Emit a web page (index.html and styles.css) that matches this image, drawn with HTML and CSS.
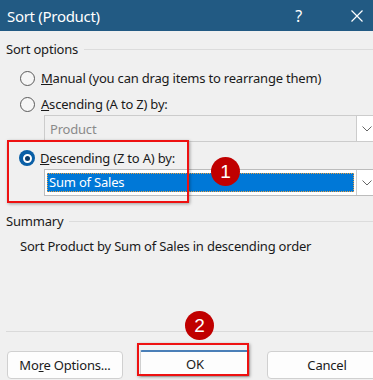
FILE: index.html
```html
<!DOCTYPE html>
<html lang="en">
<head>
    <meta charset="UTF-8">
    <meta name="viewport" content="width=device-width, initial-scale=1.0">
    <title>Sort (Product)</title>
    <link rel="stylesheet" href="styles.css">
</head>
<body>
    <div class="dialog">
        <div class="titlebar">
            <span class="title">Sort (Product)</span>
            <span class="help">?</span>
            <svg class="close" width="12" height="12" viewBox="0 0 12 12">
                <path d="M0.5 0.5 L11.5 11.5 M11.5 0.5 L0.5 11.5" stroke="#fff" stroke-width="1.2" fill="none"/>
            </svg>
        </div>

        <div class="content">
            <div class="legend"><span>Sort options</span><div class="rule"></div></div>

            <div class="radio-row first">
                <span class="radio"></span>
                <span class="label"><u>M</u>anual (you can drag items to rearrange them)</span>
            </div>
            <div class="radio-row">
                <span class="radio"></span>
                <span class="label"><u>A</u>scending (A to Z) by:</span>
            </div>
            <div class="select disabled">
                <div class="select-value">Product</div>
                <div class="select-arrow">
                    <svg width="10" height="6" viewBox="0 0 10 6"><path d="M0.5 0.5 L5 5 L9.5 0.5" stroke="#666" fill="none"/></svg>
                </div>
            </div>
            <div class="radio-row desc">
                <span class="radio checked"></span>
                <span class="label"><u>D</u>escending (Z to A) by:</span>
            </div>
            <div class="select">
                <div class="select-value"><span class="highlight">Sum of Sales</span></div>
                <div class="select-arrow">
                    <svg width="10" height="6" viewBox="0 0 10 6"><path d="M0.5 0.5 L5 5 L9.5 0.5" stroke="#666" fill="none"/></svg>
                </div>
            </div>

            <div class="legend summary-legend"><span>Summary</span><div class="rule"></div></div>
            <p class="summary">Sort Product by Sum of Sales in descending order</p>

            <div class="separator"></div>

            <div class="buttons">
                <button class="btn more">Mo<u>r</u>e Options...</button>
                <button class="btn ok">OK</button>
                <button class="btn cancel">Cancel</button>
            </div>
        </div>

        <div class="mark box-desc"></div>
        <div class="mark box-ok"></div>
        <div class="badge badge-1">1</div>
        <div class="badge badge-2">2</div>
    </div>
</body>
</html>
```

FILE: styles.css
```css
body {
    margin: 0;
    width: 373px;
    height: 380px;
    overflow: hidden;
    font-family: "Segoe UI", "Noto Sans", sans-serif;
    font-size: 13px;
    letter-spacing: -0.2px;
    color: #1a1a1a;
    background-color: #f0f0f0;
}

.dialog {
    position: relative;
    width: 390px;
    height: 380px;
    background-color: #f0f0f0;
}

.titlebar {
    height: 31px;
    background-color: #225a83;
    color: #fff;
    display: flex;
    align-items: center;
    padding-left: 7px;
}

.title {
    font-size: 15px;
    letter-spacing: -0.3px;
    flex: 1;
}

.help {
    font-size: 16px;
    margin-right: 49px;
}

.close {
    margin-right: 27px;
}

.content {
    padding: 0 0 0 6px;
}

.legend {
    display: flex;
    align-items: center;
    height: 20px;
    margin-top: 8px;
}

.legend .rule {
    flex: 1;
    height: 1px;
    background-color: #dcdcdc;
    margin-left: 6px;
}

.radio-row {
    display: flex;
    align-items: center;
    height: 26px;
    padding-left: 14px;
}

.radio-row.first {
    margin-top: 6px;
}

.radio {
    width: 15px;
    height: 15px;
    border: 1px solid #5a5a5a;
    border-radius: 50%;
    background-color: #f6f6f6;
    box-sizing: border-box;
    margin-right: 6px;
}

.radio.checked {
    width: 16px;
    height: 16px;
    border: none;
    background-color: #0a5fa6;
    display: flex;
    align-items: center;
    justify-content: center;
    margin-left: -1px;
    margin-right: 5px;
}

.radio.checked::after {
    content: "";
    width: 5px;
    height: 5px;
    border: 2px solid #fff;
    border-radius: 50%;
    background-color: #0c3a66;
}

.label {
    line-height: 18px;
}

.select {
    display: flex;
    height: 27px;
    margin: -2px 0 0 38px;
    border: 1px solid #bcbcbc;
    box-sizing: border-box;
    background-color: #fff;
}

.select.disabled {
    background-color: #f0f0f0;
    border-color: #cccccc;
    color: #8a8a8a;
}

.select-value {
    width: 311px;
    padding: 2px;
    box-sizing: border-box;
    display: flex;
    align-items: center;
}

.select.disabled .select-value {
    padding-left: 5px;
}

.highlight {
    flex: 1;
    height: 19px;
    line-height: 18px;
    background-color: #0078d7;
    color: #fff;
    padding-left: 2px;
    outline: 1px dotted #e8a040;
    outline-offset: -1px;
}

.select-arrow {
    width: 20px;
    border-left: 1px solid #cccccc;
    background-color: #fff;
    display: flex;
    align-items: center;
    justify-content: center;
}

.radio-row.desc {
    margin-top: 3px;
}

.summary-legend {
    margin-top: 15px;
}

.summary {
    margin: 6px 0 0 14px;
    line-height: 19px;
}

.separator {
    height: 1px;
    background-color: #dadada;
    margin-top: 75px;
}

.buttons {
    display: flex;
    align-items: flex-start;
    gap: 17px;
    margin-top: 19px;
    padding-left: 1px;
}

.btn {
    font-family: inherit;
    font-size: 13px;
    letter-spacing: -0.2px;
    height: 28px;
    background-color: #fdfdfd;
    border: 1px solid #d0d0d0;
    border-radius: 4px;
    color: #1a1a1a;
    padding: 0;
}

.btn.more {
    width: 116px;
}

.btn.ok {
    width: 110px;
    border-top: 2px solid #4a7fb8;
    border-radius: 2px;
    margin-top: -1px;
    height: 27px;
}

.btn.cancel {
    width: 120px;
}

.mark {
    position: absolute;
    border: 2px solid #ee1111;
    box-shadow: 1px 1px 3px rgba(0, 0, 0, 0.35);
}

.box-desc {
    left: 7px;
    top: 140px;
    width: 178px;
    height: 59px;
}

.box-ok {
    left: 137px;
    top: 343px;
    width: 108px;
    height: 29px;
}

.badge {
    position: absolute;
    width: 29px;
    height: 29px;
    border-radius: 50%;
    background-color: #c00000;
    color: #fff;
    font-family: "Liberation Sans", sans-serif;
    font-size: 19px;
    display: flex;
    align-items: center;
    justify-content: center;
}

.badge-1 {
    left: 211px;
    top: 157px;
}

.badge-2 {
    left: 185px;
    top: 311px;
}
```
